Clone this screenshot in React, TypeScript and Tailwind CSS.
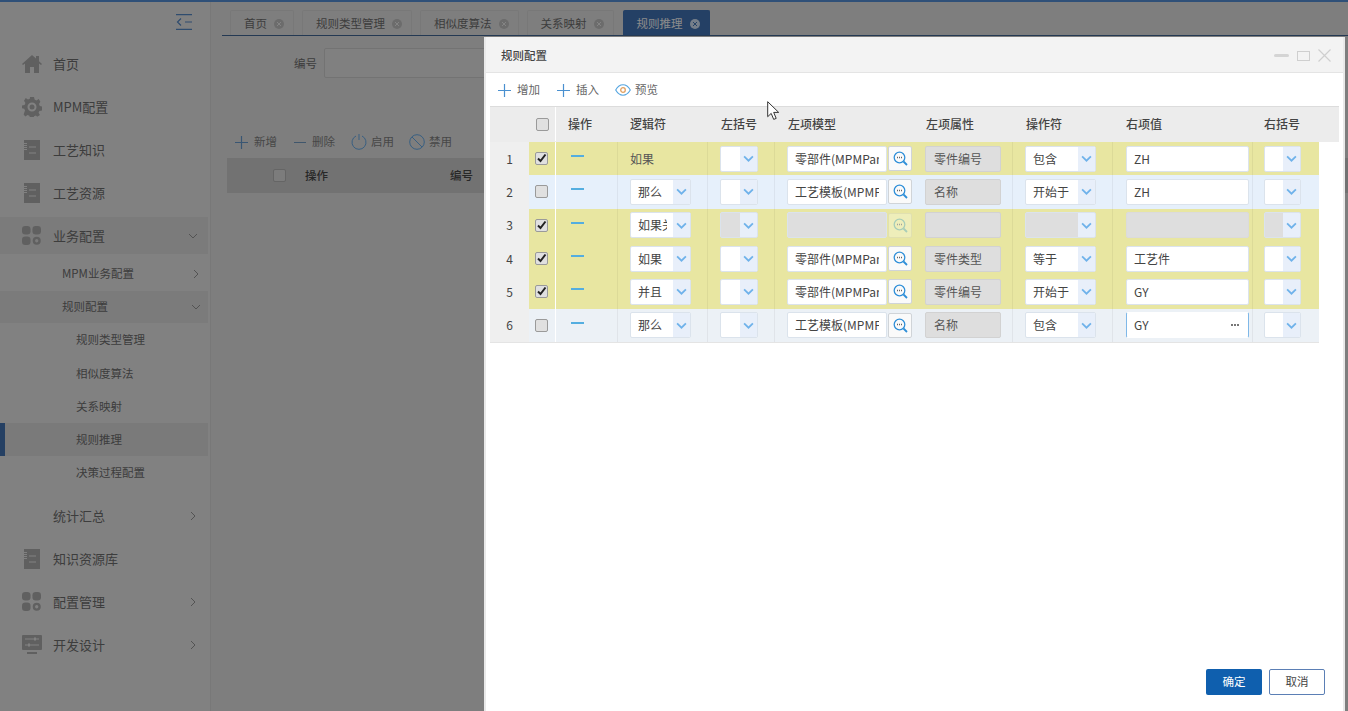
import React from "react";

const gridCols = "grid grid-cols-[39px_27px_62px_90px_67px_140px_98px_100px_140px_66px]";

function Home() {
  return (
    <svg width="20" height="18" viewBox="0 0 20 18" className="fill-[#a0a0a0]">
      <path d="M10 0 0 9l1 1 2-1.6V18h5v-6h4v6h5V8.4L19 10l1-1-3-2.7V1h-3v2.600z" />
    </svg>
  );
}

function Gear() {
  return (
    <svg width="20" height="20" viewBox="0 0 20 20" className="fill-[#a0a0a0]">
      <path
        fillRule="evenodd"
        d="M8 0h4l.6 2.600 1.800.8L16.700 2l1.700 2.800-1.400 2.300.8 1.800 2.200.6v3.900l-2.600.6-.8 1.800 1.400 2.300-2.800 1.700-1.300-1.400-1.800.8-.6 1.800H8l-.6-2.200-1.800-.8-2.300 1.400-1.700-1.800L3 13.600l-.8-1.800L0 11.200V8.500l2.600-.6.800-1.800L2 3.800 3.700 1.100 6 2.500l1.800-.8zM10 5.500a4.500 4.500 0 1 0 0 9 4.500 4.500 0 0 0 0-9z"
      />
      <circle cx="10" cy="10" r="2.500" />
    </svg>
  );
}

function Notebook() {
  return (
    <svg width="18" height="20" viewBox="0 0 18 20">
      <rect x="2" y="0" width="16" height="20" className="fill-[#a0a0a0]" />
      <path d="M0 3.500h5M0 5.500h5M0 7.500h5M0 9.500h5M7 7h7M7 13h7" className="stroke-[#d8d8d8]" strokeWidth="1" />
    </svg>
  );
}

function Blocks() {
  return (
    <svg width="19" height="19" viewBox="0 0 20 20" className="fill-[#a0a0a0]">
      <rect x="0" y="0" width="9" height="9" rx="3.500" />
      <rect x="11" y="0" width="9" height="9" rx="3.500" />
      <rect x="0" y="11" width="9" height="9" rx="3.500" />
      <circle cx="15.500" cy="15.500" r="3" fill="none" stroke="#a0a0a0" strokeWidth="2.500" />
    </svg>
  );
}

function Monitor() {
  return (
    <svg width="20" height="20" viewBox="0 0 20 20">
      <rect x="0" y="0" width="20" height="15" rx="1" className="fill-[#a0a0a0]" />
      <path d="M3 4h14M3 10h14" className="stroke-[#d8d8d8]" strokeWidth="1" />
      <rect x="12" y="2.500" width="2" height="3" className="fill-[#d8d8d8]" />
      <rect x="6" y="8.500" width="2" height="3" className="fill-[#d8d8d8]" />
      <path d="M5 18h10" className="stroke-[#a0a0a0]" strokeWidth="2" />
    </svg>
  );
}

function Chevron({ dir, size = 10, color = "#8a8a8a", width = 1 }: { dir: "down" | "right"; size?: number; color?: string; width?: number }) {
  return (
    <svg width={size} height={size} viewBox="0 0 10 10" fill="none" stroke={color} strokeWidth={width}>
      {dir === "down" ? <path d="M1 3l4 4 4-4" /> : <path d="M3 1l4 4-4 4" />}
    </svg>
  );
}

function Plus({ size = 13, color = "#4a90d0" }: { size?: number; color?: string }) {
  return (
    <svg width={size} height={size} viewBox="0 0 13 13" stroke={color} strokeWidth="1.200">
      <path d="M6.500 0v13M0 6.500h13" />
    </svg>
  );
}

function TabClose({ active }: { active?: boolean }) {
  return (
    <svg width="10" height="10" viewBox="0 0 10 10">
      <circle cx="5" cy="5" r="5" fill={active ? "#c3d3e6" : "#b4b4b4"} />
      <path d="M3 3l4 4M7 3l-4 4" stroke={active ? "#3e6ea8" : "#dcdcdc"} strokeWidth="1" />
    </svg>
  );
}

function Tab({ label, active }: { label: string; active?: boolean }) {
  return (
    <div
      className={`flex h-[25px] items-center gap-[7px] rounded-t-[2px] border border-b-0 pl-[13px] pr-[9px] pt-[1px] text-[11.5px] ${
        active ? "ml-[1px] border-[#3d6ba8] bg-[#3d6ba8] text-[#e8e8e8]" : "border-[#c9c9c9] bg-[#d2d2d2] text-[#666]"
      }`}
    >
      {label}
      <TabClose active={active} />
    </div>
  );
}

function NavItem({ icon, label, arrow, h = "h-[43px]" }: { icon?: React.ReactNode; label: string; arrow?: "down" | "right"; h?: string }) {
  return (
    <div className={`flex items-center pl-[22px] pr-[12px] text-[13px] text-[#666] ${h}`}>
      <div className="flex w-[31px] shrink-0 items-center">{icon}</div>
      <span className="flex-1">{label}</span>
      {arrow && <Chevron dir={arrow} />}
    </div>
  );
}

function Sidebar() {
  return (
    <aside className="flex w-[211px] shrink-0 flex-col border-r border-[#c8c8c8] bg-[#d8d8d8]">
      <div className="flex h-[40px] items-center justify-end pr-[18px]">
        <svg width="16" height="16" viewBox="0 0 16 16" fill="none" stroke="#4f7fb8" strokeWidth="1.200">
          <path d="M0 .600h16M0 15.400h16M9 8h7M5 4.500 1.500 8 5 11.500" />
        </svg>
      </div>
      <NavItem icon={<Home />} label="首页" />
      <NavItem icon={<Gear />} label="MPM配置" />
      <NavItem icon={<Notebook />} label="工艺知识" />
      <NavItem icon={<Notebook />} label="工艺资源" />
      <div className="flex h-[43px] items-center py-[3px]">
        <div className="mr-[2px] flex h-full flex-1 items-center bg-[#cdcdcd] pl-[22px] pr-[10px] text-[13px] text-[#666]">
          <div className="flex w-[31px] shrink-0 items-center">
            <Blocks />
          </div>
          <span className="flex-1">业务配置</span>
          <Chevron dir="down" />
        </div>
      </div>
      <div className="flex h-[34px] items-center pl-[62px] pr-[9px] text-[11.5px] text-[#666]">
        <span className="flex-1">MPM业务配置</span>
        <Chevron dir="right" />
      </div>
      <div className="mr-[2px] flex h-[32px] items-center bg-[#cdcdcd] pl-[62px] pr-[7px] text-[11.5px] text-[#666]">
        <span className="flex-1">规则配置</span>
        <Chevron dir="down" />
      </div>
      <div className="flex h-[34px] items-center pl-[76px] text-[11.5px] text-[#666]">规则类型管理</div>
      <div className="flex h-[33px] items-center pl-[76px] text-[11.5px] text-[#666]">相似度算法</div>
      <div className="flex h-[33px] items-center pl-[76px] text-[11.5px] text-[#666]">关系映射</div>
      <div className="mr-[2px] flex h-[33px] items-center border-l-[5px] border-[#3f6ba5] bg-[#cbcbcb] pl-[71px] text-[11.5px] text-[#666]">规则推理</div>
      <div className="mb-[6px] flex h-[33px] items-center pl-[76px] text-[11.5px] text-[#666]">决策过程配置</div>
      <NavItem label="统计汇总" arrow="right" h="h-[42px]" />
      <NavItem icon={<Notebook />} label="知识资源库" />
      <NavItem icon={<Blocks />} label="配置管理" arrow="right" />
      <NavItem icon={<Monitor />} label="开发设计" arrow="right" />
    </aside>
  );
}

function Main() {
  return (
    <main className="min-w-0 flex-1 bg-[#d2d2d2]">
      <div className="ml-[11px] flex h-[34px] items-end gap-[8px] border-b border-[#3d5f8a] pl-[8px]">
        <Tab label="首页" />
        <Tab label="规则类型管理" />
        <Tab label="相似度算法" />
        <Tab label="关系映射" />
        <Tab label="规则推理" active />
      </div>
      <div className="mt-[12px] flex items-center pl-[83px] text-[11.5px] text-[#666]">
        <span className="w-[30px] pt-[1px]">编号</span>
        <div className="h-[30px] w-[300px] rounded-[2px] border border-[#c0c0c0] bg-[#d6d6d6]" />
      </div>
      <div className="mt-[54px] flex h-[20px] items-center pl-[24px] text-[11.5px] text-[#777]">
        <Plus color="#5f8fc0" />
        <span className="ml-[6px]">新增</span>
        <span className="ml-[17px] h-px w-[12px] bg-[#6a8fb5]" />
        <span className="ml-[6px]">删除</span>
        <svg className="ml-[16px]" width="16" height="16" viewBox="0 0 16 16" fill="none" stroke="#5f9fd8" strokeWidth="1">
          <path d="M5 2a7 7 0 1 0 6 0M8 0v6" />
        </svg>
        <span className="ml-[4px]">启用</span>
        <svg className="ml-[15px]" width="16" height="16" viewBox="0 0 16 16" fill="none" stroke="#5f9fd8" strokeWidth="1">
          <circle cx="8" cy="8" r="7.300" />
          <path d="M3 3l10 10" />
        </svg>
        <span className="ml-[4px]">禁用</span>
      </div>
      <div className="ml-[16px] mt-[6px] flex h-[35px] items-center bg-[#bebebe] text-[11.5px] font-medium text-[#444]">
        <span className="ml-[46px] h-[13px] w-[13px] rounded-[2px] border border-[#a8a8a8] bg-[#cfcfcf]" />
        <span className="ml-[19px]">操作</span>
        <span className="ml-[122px]">编号</span>
      </div>
    </main>
  );
}

function Check({ on }: { on?: boolean }) {
  return (
    <span className="flex h-[13px] w-[13px] items-center justify-center rounded-[2px] border border-[#9a9a9a] bg-[#e0e0e0]">
      {on && (
        <svg width="11" height="11" viewBox="0 0 11 11" fill="none" stroke="#222" strokeWidth="2">
          <path d="M2 5.500 4.500 8 9.500 1.500" />
        </svg>
      )}
    </span>
  );
}

function Select({ text, w, off }: { text?: string; w: string; off?: boolean }) {
  return (
    <div className={`flex h-[26px] overflow-hidden rounded-[2px] border border-[#dbe3ec] ${off ? "bg-[#dedede]" : "bg-white"} ${w}`}>
      <div className="min-w-0 flex-1 pl-[7px] pr-[6px]">
        <div className="overflow-hidden whitespace-nowrap text-[12px] leading-[24px] text-[#444]">{text}</div>
      </div>
      <span className="flex w-[17px] shrink-0 items-center justify-center bg-[#e8effa]">
        <Chevron dir="down" size={11} color="#6fb2ea" width={1.600} />
      </span>
    </div>
  );
}

function Finder({ off }: { off?: boolean }) {
  const c = off ? "#a8cdb8" : "#2f8fd8";
  return (
    <span className={`flex h-[25px] w-[24px] shrink-0 items-center justify-center rounded-[2px] border ${off ? "border-[#e0e0b0] bg-[#eeeeba]" : "border-[#d0d4d8] bg-[#fafafa]"}`}>
      <svg width="15" height="15" viewBox="0 0 15 15" fill="none" stroke={c} strokeWidth="1.300">
        <circle cx="6.500" cy="6.500" r="5.300" />
        <path d="M10.500 10.500 14 14" strokeWidth="1.800" />
        <path d="M4 6.500h.9M6 6.500h.9M8 6.500h.9" stroke={off ? "#9a9a9a" : "#555"} />
      </svg>
    </span>
  );
}

type RowData = { n: number; on?: boolean; bg: string; logic?: string; plain?: boolean; model?: string; attr?: string; op?: string; val?: string; focus?: boolean; off?: boolean };

const rows: RowData[] = [
  { n: 1, on: true, bg: "bg-[#e8e6a1]", logic: "如果", plain: true, model: "零部件(MPMPart)", attr: "零件编号", op: "包含", val: "ZH" },
  { n: 2, bg: "bg-[#e6f0fb]", logic: "那么", model: "工艺模板(MPMProcess)", attr: "名称", op: "开始于", val: "ZH" },
  { n: 3, on: true, bg: "bg-[#e8e6a1]", logic: "如果关系", off: true },
  { n: 4, on: true, bg: "bg-[#e8e6a1]", logic: "如果", model: "零部件(MPMPart)", attr: "零件类型", op: "等于", val: "工艺件" },
  { n: 5, on: true, bg: "bg-[#e8e6a1]", logic: "并且", model: "零部件(MPMPart)", attr: "零件编号", op: "开始于", val: "GY" },
  { n: 6, bg: "bg-[#ecf1f6]", logic: "那么", model: "工艺模板(MPMProcess)", attr: "名称", op: "包含", val: "GY", focus: true },
];

function Row({ r }: { r: RowData }) {
  return (
    <div className={`${gridCols} items-center`}>
      <div className="flex h-full items-center justify-center bg-[#efefef] text-[12px] text-[#444]">{r.n}</div>
      <div className={`flex h-full items-center border-r border-white pl-[6px] ${r.bg}`}>
        <Check on={r.on} />
      </div>
      <div className={`flex h-full items-start border-r border-black/5 pl-[15px] pt-[13px] ${r.bg}`}>
        <span className="h-[2px] w-[13px] bg-[#54aee0]" />
      </div>
      <div className={`flex h-full items-center border-r border-black/5 pl-[12px] ${r.bg}`}>
        {r.plain ? <span className="text-[12px] text-[#555]">{r.logic}</span> : <Select text={r.logic} w="w-[61px]" />}
      </div>
      <div className={`flex h-full items-center border-r border-black/5 pl-[12px] ${r.bg}`}>
        <Select w="w-[38px]" off={r.off} />
      </div>
      <div className={`flex h-full items-center gap-px pl-[12px] ${r.bg}`}>
        <div className={`h-[26px] w-[100px] rounded-[2px] border border-[#dbe3ec] pl-[7px] pr-[7px] text-[12px] leading-[24px] text-[#444] ${r.off ? "bg-[#dedede]" : "bg-white"}`}>
          <div className="overflow-hidden whitespace-nowrap">{r.model}</div>
        </div>
        <Finder off={r.off} />
      </div>
      <div className={`flex h-full items-center border-r border-black/5 pl-[10px] ${r.bg}`}>
        <div className="h-[26px] w-[76px] rounded-[2px] border border-[#d2d2d2] bg-[#dedede] pl-[8px] text-[12px] leading-[24px] text-[#555]">{r.attr}</div>
      </div>
      <div className={`flex h-full items-center border-r border-black/5 pl-[12px] ${r.bg}`}>
        <Select text={r.op} w="w-[71px]" off={r.off} />
      </div>
      <div className={`flex h-full items-center border-r border-black/5 pl-[13px] ${r.bg}`}>
        <div
          className={`flex h-[26px] w-[123px] items-center justify-between rounded-[2px] border pl-[7px] pr-[9px] text-[12px] text-[#444] ${
            r.focus ? "border-x-[#7fb8e8] border-y-white bg-white" : r.off ? "border-[#dbdbdb] bg-[#dedede]" : "border-[#dbe3ec] bg-white"
          }`}
        >
          <span>{r.val}</span>
          {r.focus && (
            <span className="flex gap-[1px]">
              <span className="h-[2px] w-[2px] bg-[#777]" />
              <span className="h-[2px] w-[2px] bg-[#777]" />
              <span className="h-[2px] w-[2px] bg-[#777]" />
            </span>
          )}
        </div>
      </div>
      <div className={`flex h-full items-center pl-[11px] ${r.bg}`}>
        <Select w="w-[37px]" off={r.off} />
      </div>
    </div>
  );
}

function RuleModal() {
  return (
    <div className="absolute bottom-0 left-[484px] right-[3px] top-[37px] flex flex-col border-x-2 border-[#e9e9e9] bg-white">
      <div className="flex h-[36px] shrink-0 items-center justify-between border-b border-[#e4e4e4] bg-[#f3f3f3] pl-[15px] pr-[12px] pt-[2px]">
        <span className="text-[11.5px] font-medium text-[#444]">规则配置</span>
        <div className="flex items-center gap-[8px]">
          <span className="h-[3px] w-[15px] rounded-full bg-[#d4d4d4]" />
          <span className="h-[10px] w-[13px] border border-[#cfcfcf]" />
          <svg width="13" height="13" viewBox="0 0 13 13" stroke="#cfcfcf" strokeWidth="1.200">
            <path d="M.5.5l12 12M12.500.5l-12 12" />
          </svg>
        </div>
      </div>
      <div className="flex h-[33px] shrink-0 items-center pl-[12px] pt-[1px] text-[11.5px] text-[#666]">
        <Plus />
        <span className="ml-[6px]">增加</span>
        <span className="ml-[17px] flex">
          <Plus />
        </span>
        <span className="ml-[6px]">插入</span>
        <svg className="ml-[16px]" width="16" height="12" viewBox="0 0 16 12" fill="none">
          <path d="M.7 6C3 2 5.500.8 8 .8S13 2 15.300 6C13 10 10.500 11.200 8 11.200S3 10 .7 6z" stroke="#55a5e0" strokeWidth="1.100" />
          <circle cx="8" cy="6" r="2.300" stroke="#e0a060" strokeWidth="1.300" />
        </svg>
        <span className="ml-[4px]">预览</span>
      </div>
      <div className="ml-[4px] mr-[4px] shrink-0">
        <div className={`${gridCols} h-[36px] items-center border-t border-[#dcdcdc] bg-[#ececec] pb-[1px] text-[12px] font-medium text-[#444]`}>
          <div className="h-full" />
          <div className="flex h-full items-center border-r border-white pl-[7px]">
            <Check />
          </div>
          <div className="pl-[12px]">操作</div>
          <div className="pl-[12px]">逻辑符</div>
          <div className="pl-[13px]">左括号</div>
          <div className="pl-[13px]">左项模型</div>
          <div className="pl-[11px]">左项属性</div>
          <div className="pl-[13px]">操作符</div>
          <div className="pl-[13px]">右项值</div>
          <div className="pl-[11px]">右括号</div>
        </div>
        <div className="grid h-[201px] w-[829px] grid-rows-6 border-b border-[#e4e4e4]">
          {rows.map((r) => (
            <Row key={r.n} r={r} />
          ))}
        </div>
      </div>
      <div className="mt-auto flex justify-end gap-[7px] pb-[16px] pr-[18px] text-[11.5px]">
        <button className="h-[26px] w-[56px] rounded-[2px] bg-[#0f5fae] text-white">确定</button>
        <button className="h-[26px] w-[56px] rounded-[2px] border border-[#5b7fb5] bg-white text-[#444]">取消</button>
      </div>
    </div>
  );
}

export default function App() {
  return (
    <div className="relative h-[711px] w-[1348px] overflow-hidden bg-[#d2d2d2] font-['Noto_Sans_CJK_SC','Liberation_Sans',sans-serif]">
      <div className="h-[2px] bg-[#4f86c8]" />
      <div className="flex h-[709px]">
        <Sidebar />
        <Main />
      </div>
      {/* dim layer behind the dialog */}
      <div className="absolute inset-0 bg-black/40" />
      <RuleModal />
      <svg className="absolute left-[767px] top-[101px]" width="13" height="20" viewBox="0 0 13 20" fill="white" stroke="#333" strokeWidth="1">
        <path d="M.7.7v15l3.500-3.300 2.500 6 2.500-1-2.500-6h5z" />
      </svg>
    </div>
  );
}
